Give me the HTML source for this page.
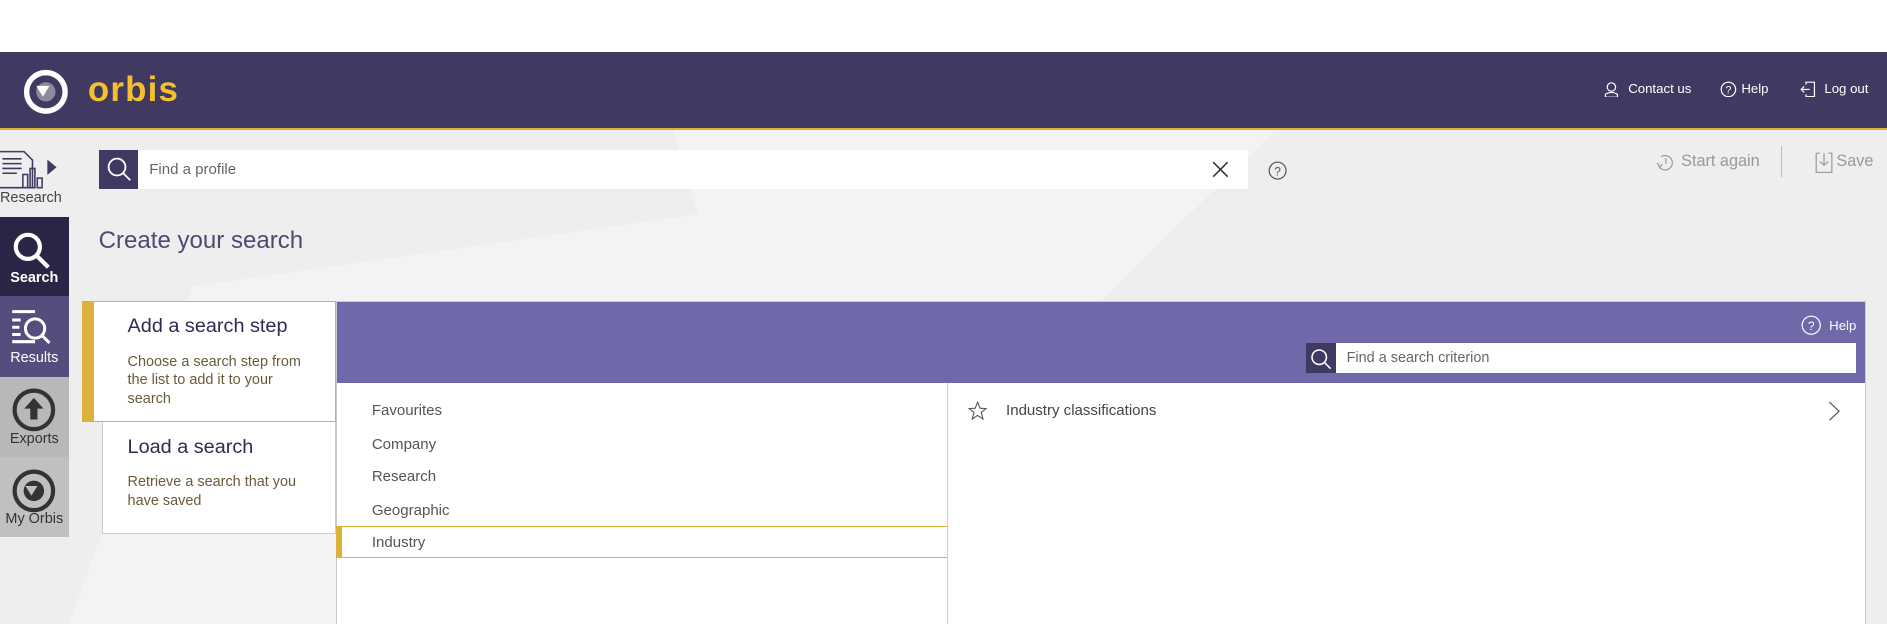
<!DOCTYPE html>
<html><head><meta charset="utf-8">
<style>
html,body{margin:0;padding:0;background:#fff;overflow:hidden;width:1887px;height:624px}
#w{zoom:1.2034;width:1568px;height:519px;position:relative;font-family:"Liberation Sans",sans-serif;overflow:hidden}
.a{position:absolute}
.hdr{left:0;top:43px;width:1568px;height:63px;background:#403a62;border-bottom:2px solid #d9b13b}
.main{left:0;top:108px;width:1568px;height:411px;background:#eeeeee}
.side div{position:absolute;left:0;width:57px;text-align:center;font-size:12px}
.t{font-size:11px;color:#fff}
.li{position:absolute;left:30px;font-size:12.5px;color:#555}
</style></head><body><div id="w">
<div class="a hdr"></div>
<svg class="a" style="left:19px;top:57px" width="38" height="38" viewBox="0 0 38 38"><circle cx="19" cy="19" r="16" fill="none" stroke="#fff" stroke-width="4.5"/><circle cx="19" cy="19" r="8" fill="#8d8a9c"/><path d="M11 14 L22 14 L16.5 23 Z" fill="#fff"/></svg>
<div class="a" style="left:73px;top:58px;font-size:29px;font-weight:bold;color:#f5c02b;letter-spacing:1px">orbis</div>
<svg class="a" style="left:1332px;top:67px" width="14" height="14" viewBox="0 0 14 14" fill="none" stroke="#fff" stroke-width="1"><circle cx="7" cy="5" r="3.5"/><path d="M2 13.5 L2 11 Q7 8 12 11 L12 13.5 Z"/></svg>
<div class="a t" style="left:1353px;top:67px">Contact us</div>
<svg class="a" style="left:1429px;top:67px" width="14" height="14" viewBox="0 0 14 14"><circle cx="7" cy="7" r="6" fill="none" stroke="#fff"/><text x="7" y="10.5" font-size="9" fill="#fff" text-anchor="middle" font-family="Liberation Sans">?</text></svg>
<div class="a t" style="left:1447px;top:67px">Help</div>
<svg class="a" style="left:1496px;top:67px" width="14" height="14" viewBox="0 0 14 14" fill="none" stroke="#fff"><path d="M5 3 V1 H12 V13 H5 V11"/><path d="M1 7 H8 M3.5 4.5 L1 7 L3.5 9.5"/></svg>
<div class="a t" style="left:1516px;top:67px">Log out</div>

<div class="a main"></div>
<svg class="a" style="left:0;top:108px" width="1568" height="411"><path d="M57 411 L160 130 L580 70 L560 0 L1060 0 L640 411 Z" fill="#f3f3f3"/></svg>

<div class="a side" style="left:0;top:108px">
<div style="top:0;height:72px;background:#eeeeee;color:#444"><svg style="position:absolute;left:0;top:15px" width="50" height="36" viewBox="0 0 50 36" fill="none" stroke="#403a62" stroke-width="1.3"><path d="M0 3 H20 L27 10 V33 H0"/><path d="M2 9 H18 M2 13 H18 M2 17 H18 M2 21 H14"/><rect x="19" y="22" width="4" height="11"/><rect x="25" y="17" width="4" height="16"/><rect x="31" y="25" width="4" height="8"/><path d="M40 11 L46 16 L40 21 Z" fill="#403a62"/></svg><div style="position:absolute;top:50px;width:57px;text-align:left;font-size:12px">Research</div></div>
<div style="top:72px;height:66px;background:#2b2545;color:#fff;font-weight:bold"><svg style="position:absolute;left:9px;top:11px" width="34" height="34" viewBox="0 0 34 34" fill="none" stroke="#fff" stroke-width="3.5"><circle cx="14" cy="14" r="10"/><path d="M21 21 L31 31"/></svg><div style="position:absolute;top:44px;width:57px">Search</div></div>
<div style="top:138px;height:67px;background:#574c7e;color:#fff"><svg style="position:absolute;left:9px;top:10px" width="36" height="32" viewBox="0 0 36 32" fill="none" stroke="#fff" stroke-width="2.5"><path d="M1 3 H20 M1 10 H8 M1 16 H7 M1 22 H8 M1 28 H20"/><circle cx="20" cy="17" r="8"/><path d="M26 23 L32 29"/></svg><div style="position:absolute;top:45px;width:57px">Results</div></div>
<div style="top:205px;height:67px;background:#b8b8b8;color:#333"><svg style="position:absolute;left:9px;top:9px" width="38" height="38" viewBox="0 0 38 38"><circle cx="19" cy="19" r="16" fill="none" stroke="#333" stroke-width="3.5"/><path d="M19 9 L27 18 H22 V27 H16 V18 H11 Z" fill="#333"/></svg><div style="position:absolute;top:45px;width:57px">Exports</div></div>
<div style="top:272px;height:66px;background:#c0c0c0;color:#333"><svg style="position:absolute;left:9px;top:9px" width="38" height="38" viewBox="0 0 38 38"><circle cx="19" cy="19" r="16" fill="none" stroke="#333" stroke-width="3.5"/><circle cx="19" cy="19" r="8.5" fill="#333"/><path d="M12 15 L22 15 L17 23 Z" fill="#c0c0c0"/></svg><div style="position:absolute;top:45px;width:57px">My Orbis</div></div>
</div>

<div class="a" style="left:82px;top:125px;width:955px;height:32px;background:#fff"></div>
<div class="a" style="left:82px;top:125px;width:33px;height:32px;background:#403a62"></div>
<svg class="a" style="left:87px;top:129px" width="24" height="24" viewBox="0 0 24 24" fill="none" stroke="#fff" stroke-width="1.5"><circle cx="10" cy="10" r="7"/><path d="M15 15 L21 21"/></svg>
<div class="a" style="left:124px;top:134px;font-size:12.5px;color:#666">Find a profile</div>
<svg class="a" style="left:1007px;top:134px" width="14" height="14" stroke="#333" stroke-width="1.3"><path d="M1 1 L13 13 M13 1 L1 13"/></svg>
<svg class="a" style="left:1054px;top:134px" width="16" height="16" viewBox="0 0 16 16"><circle cx="8" cy="8" r="7" fill="none" stroke="#555"/><text x="8" y="12" font-size="10" fill="#555" text-anchor="middle" font-family="Liberation Sans">?</text></svg>
<svg class="a" style="left:1375px;top:126px" width="18" height="18" viewBox="0 0 18 18" fill="none" stroke="#999"><path d="M4 13 A6 6 0 1 0 5 4"/><path d="M9 5 V10 M2 9 L4 13 L6 10"/></svg>
<div class="a" style="left:1397px;top:126px;font-size:13.5px;color:#999">Start again</div>
<div class="a" style="left:1480px;top:121px;width:1px;height:26px;background:#bbb"></div>
<svg class="a" style="left:1508px;top:126px" width="16" height="18" viewBox="0 0 16 18" fill="none" stroke="#999"><path d="M1 1 H4 M11 1 H14 V17 H1 V1"/><path d="M7.5 1 V11 M4 8 L7.5 11 L11 8"/></svg>
<div class="a" style="left:1526px;top:126px;font-size:13.5px;color:#999">Save</div>

<div class="a" style="left:82px;top:189px;font-size:20px;color:#4e4a70">Create your search</div>

<div class="a" style="left:279px;top:250px;width:1272px;height:68px;background:#7069a9;border:1px solid #ccc;border-bottom:none;box-sizing:border-box"></div>
<svg class="a" style="left:1497px;top:262px" width="17" height="17" viewBox="0 0 17 17"><circle cx="8.5" cy="8.5" r="7.5" fill="none" stroke="#fff"/><text x="8.5" y="12.5" font-size="10" fill="#fff" text-anchor="middle" font-family="Liberation Sans">?</text></svg>
<div class="a" style="left:1520px;top:264px;font-size:11px;color:#fff">Help</div>
<div class="a" style="left:1085px;top:285px;width:457px;height:25px;background:#fff"></div>
<div class="a" style="left:1085px;top:285px;width:25px;height:25px;background:#403a62"></div>
<svg class="a" style="left:1088px;top:288px" width="20" height="20" viewBox="0 0 20 20" fill="none" stroke="#fff" stroke-width="1.3"><circle cx="8.5" cy="8.5" r="6"/><path d="M13 13 L18 18"/></svg>
<div class="a" style="left:1119px;top:291px;font-size:12px;color:#666">Find a search criterion</div>

<div class="a" style="left:279px;top:318px;width:1272px;height:210px;background:#fff;border-left:1px solid #ccc;border-right:1px solid #ccc;box-sizing:border-box"></div>
<div class="a" style="left:787px;top:318px;width:1px;height:210px;background:#ccc"></div>
<div class="a" style="left:279px;top:318px;width:508px;height:210px">
<div class="li" style="top:16px">Favourites</div>
<div class="li" style="top:44px">Company</div>
<div class="li" style="top:71px">Research</div>
<div class="li" style="top:99px">Geographic</div>
<div style="position:absolute;left:0;top:119px;width:508px;height:27px;border-top:1px solid #d9b13b;border-bottom:1px solid #d9b13b;box-sizing:border-box;border-left:5px solid #d9b13b"></div>
<div class="li" style="top:126px">Industry</div>
</div>
<svg class="a" style="left:804px;top:333px" width="16" height="16" viewBox="0 0 16 16" fill="none" stroke="#555" stroke-width="0.9"><path d="M8 1 L10 6 L15 6.3 L11 9.5 L12.5 15 L8 12 L3.5 15 L5 9.5 L1 6.3 L6 6 Z"/></svg>
<div class="a" style="left:836px;top:334px;font-size:12.5px;color:#444">Industry classifications</div>
<svg class="a" style="left:1518px;top:333px" width="12" height="17" fill="none" stroke="#555"><path d="M2 1 L10 8.5 L2 16"/></svg>

<div class="a" style="left:85px;top:350px;width:194px;height:94px;background:#fff;border:1px solid #ccc;box-sizing:border-box"></div>
<div class="a" style="left:106px;top:362px;font-size:16.5px;color:#2f2b52">Load a search</div>
<div class="a" style="left:106px;top:393px;font-size:12px;color:#6b5a3a;line-height:15.5px;width:160px">Retrieve a search that you have saved</div>
<div class="a" style="left:68px;top:250px;width:211px;height:101px;background:#fff;border:1px solid #d9b13b;border-left:10px solid #d9b13b;box-sizing:border-box"></div>
<div class="a" style="left:106px;top:262px;font-size:16.5px;color:#2f2b52">Add a search step</div>
<div class="a" style="left:106px;top:293px;font-size:12px;color:#6b5a3a;line-height:15.5px;width:160px">Choose a search step from the list to add it to your search</div>
</div></body></html>
